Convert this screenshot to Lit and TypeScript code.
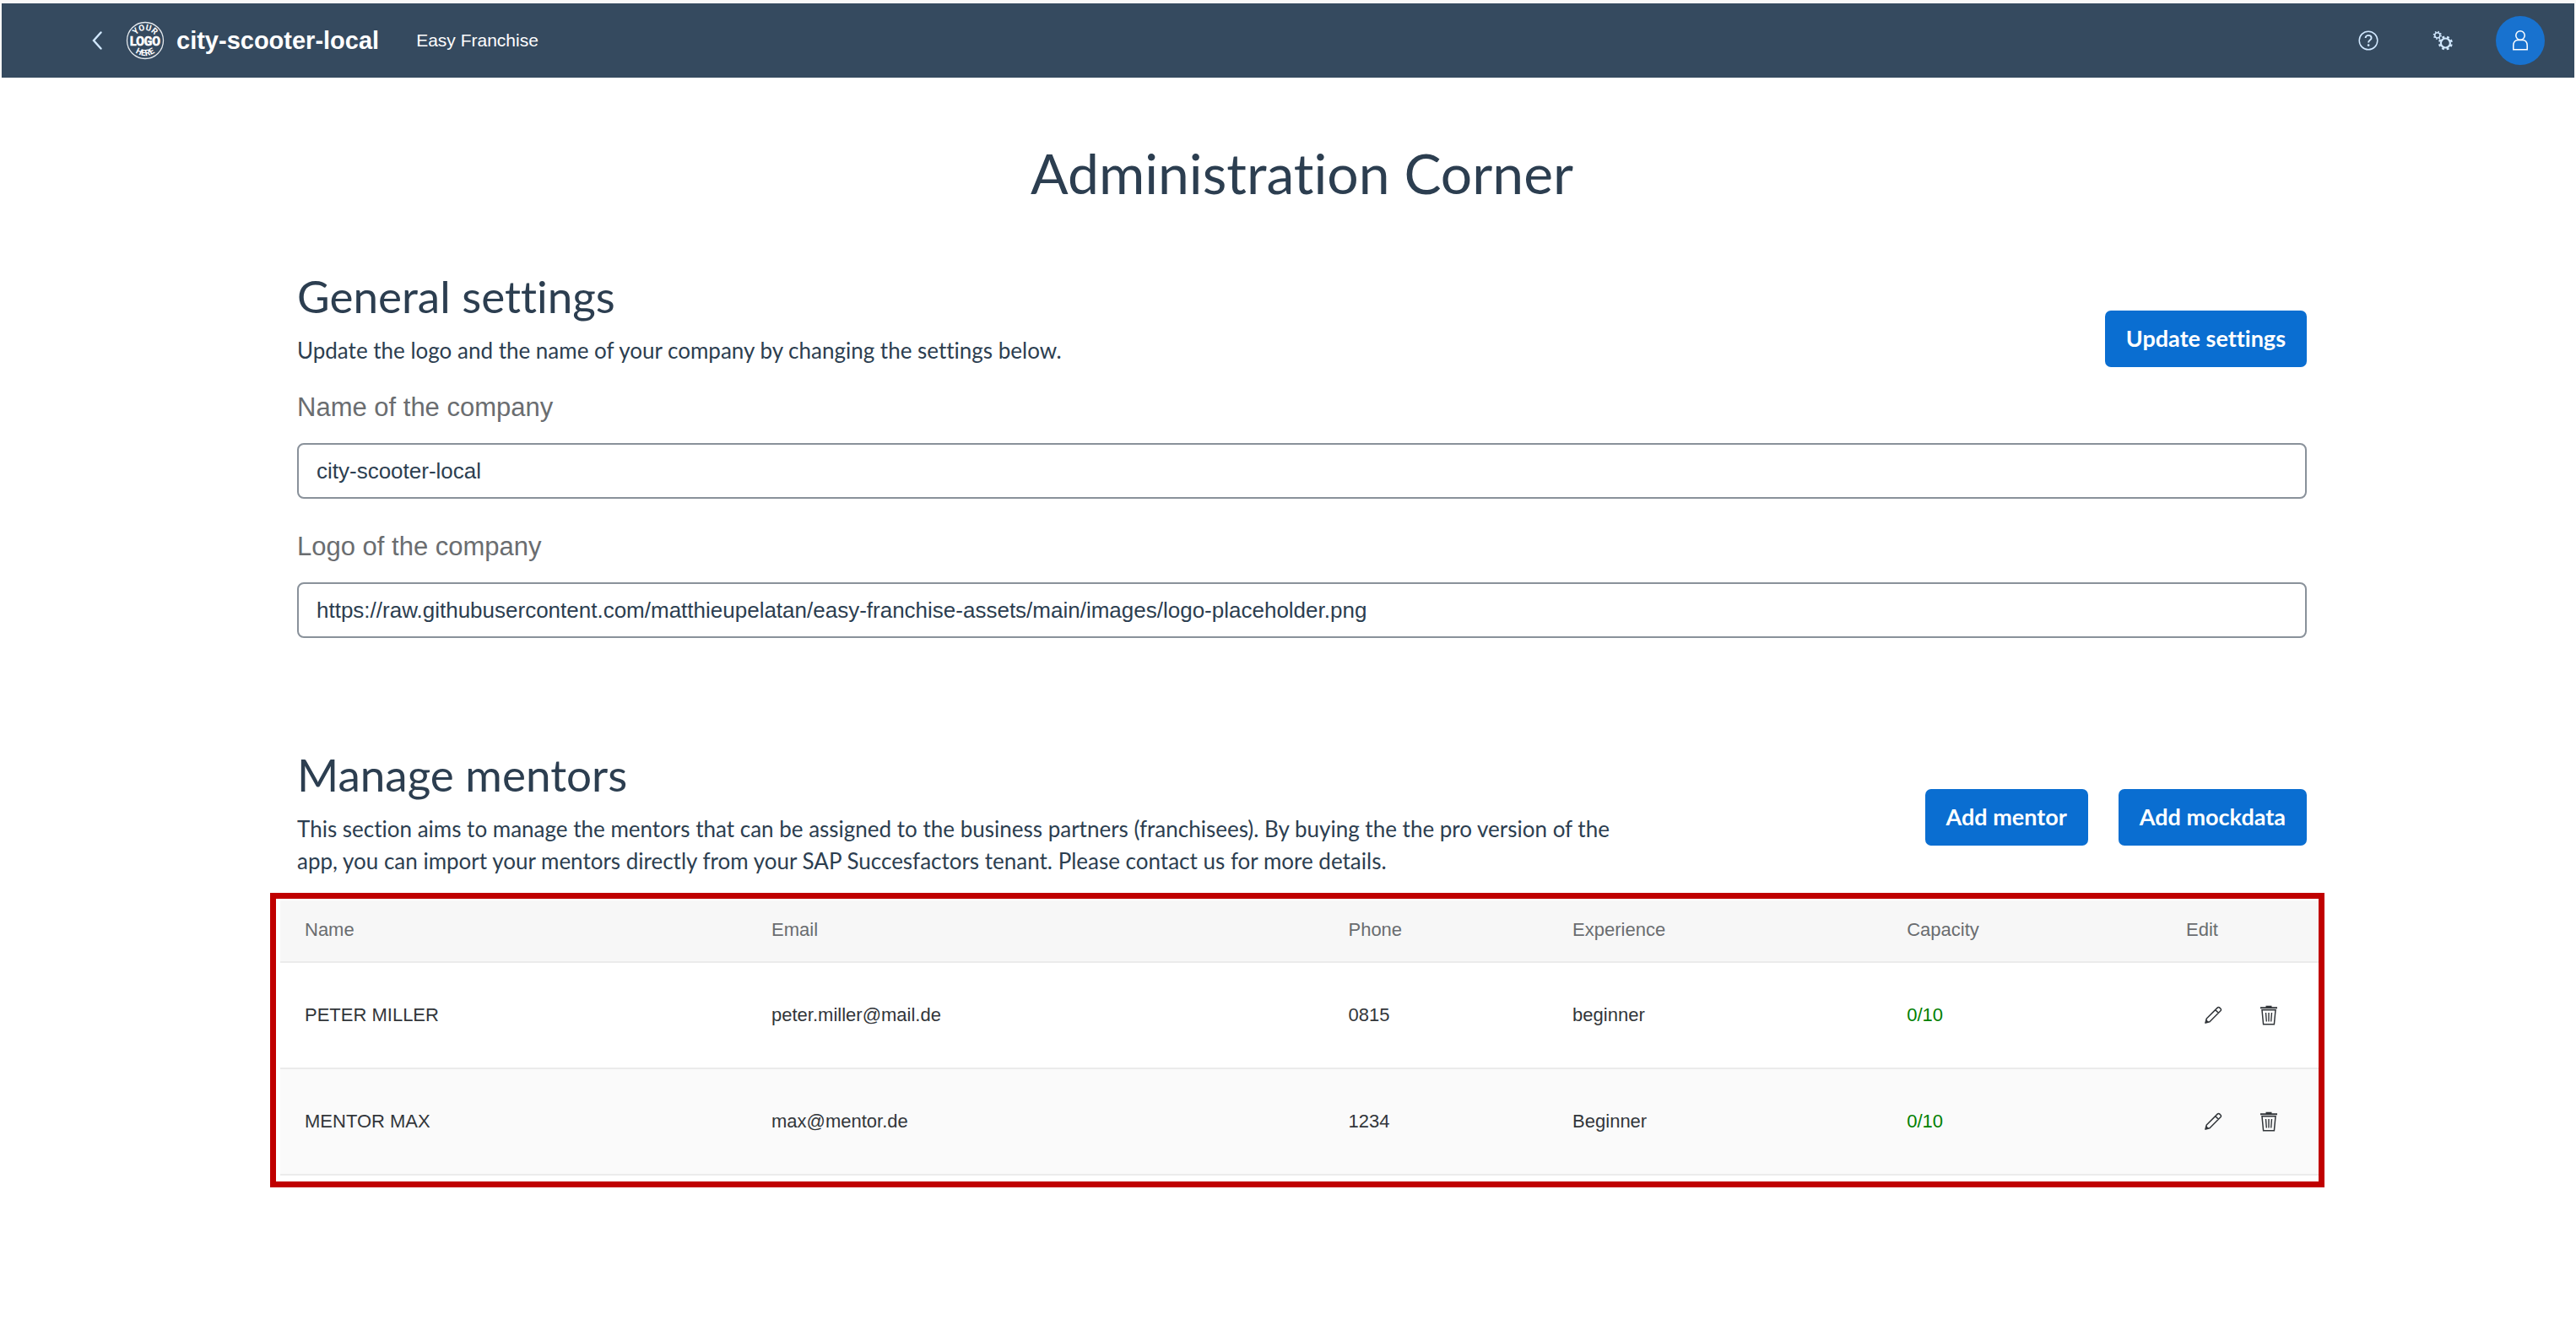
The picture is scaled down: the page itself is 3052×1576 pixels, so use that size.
import { LitElement, html, css, svg } from "lit";
import { customElement, property, state } from "lit/decorators.js";

interface Mentor {
  name: string;
  email: string;
  phone: string;
  experience: string;
  capacity: string;
}

const backIcon = svg`<svg width="12" height="22" viewBox="0 0 12 22" aria-hidden="true">
  <path d="M10.500 1.500 L2 11 L10.500 20.500" fill="none" stroke="#d1e8ff" stroke-width="2.400" stroke-linecap="round"/>
</svg>`;

const logo = svg`<svg class="logo" width="46" height="46" viewBox="0 0 46 46" role="img" aria-label="Company logo">
  <defs>
    <path id="upper" d="M9.500 24.500 A13.500 13.500 0 0 1 36.500 24.500"/>
    <path id="lower" d="M3.500 21.500 A19.500 19.500 0 0 0 42.500 21.500"/>
  </defs>
  <circle cx="23" cy="23" r="21.500" fill="none" stroke="#e4e9ee" stroke-width="1.300"/>
  <g fill="#ffffff" font-family="Roboto, Liberation Sans, sans-serif" font-weight="700" text-anchor="middle">
    <text font-size="10"><textPath href="#upper" startOffset="50%">YOUR</textPath></text>
    <text x="23" y="28.500" font-size="14" stroke="#ffffff" stroke-width="0.700">LOGO</text>
    <text font-size="10"><textPath href="#lower" startOffset="50%">HERE</textPath></text>
  </g>
</svg>`;

const helpIcon = svg`<svg width="24" height="24" viewBox="0 0 24 24" aria-hidden="true" fill="none" stroke="#d1e8ff" stroke-width="1.500">
  <circle cx="12" cy="12" r="10.800"/>
  <path d="M8.600 9 C8.600 4.800 15.600 4.800 15.600 9 C15.600 11.600 12.100 11.400 12.100 14.400" stroke-width="1.900"/>
  <circle cx="12.100" cy="17.600" r="1.300" fill="#d1e8ff" stroke="none"/>
</svg>`;

const gearsIcon = svg`<svg width="24" height="24" viewBox="0 0 24 24" aria-hidden="true" fill="none" stroke="#d1e8ff">
  <circle cx="5.800" cy="5.800" r="3.100" stroke-width="1.500"/>
  <circle cx="5.800" cy="5.800" r="4.300" stroke-width="1.600" stroke-dasharray="1.500 1.877"/>
  <circle cx="15.400" cy="15" r="5.500" stroke-width="2.200"/>
  <circle cx="15.400" cy="15" r="7.300" stroke-width="2.400" stroke-dasharray="2.800 2.933" stroke-dashoffset="-1.500"/>
</svg>`;

const userIcon = svg`<svg width="20" height="26" viewBox="0 0 20 26" aria-hidden="true" fill="none" stroke="#ffffff" stroke-width="1.500">
  <circle cx="10" cy="7" r="5.200"/>
  <path d="M1.800 23.700 V18.700 C1.800 14.700 4.400 12.400 7 12.400 H13 C15.600 12.400 18.200 14.700 18.200 18.700 V23.700 Z"/>
</svg>`;

const editIcon = svg`<svg width="22" height="22" viewBox="0 0 22 22" aria-hidden="true" fill="none" stroke="#32363a" stroke-width="1.500" stroke-linejoin="round">
  <path d="M2 20 L3.300 15 L16.200 2.100 C17 1.300 18 1.300 18.800 2.100 L19.900 3.200 C20.700 4 20.700 5 19.900 5.800 L7 18.700 Z M13.700 4.600 L17.400 8.300"/>
  <path d="M1.600 20.400 L2.900 16 L6 19.100 Z" fill="#32363a" stroke="none"/>
</svg>`;

const deleteIcon = svg`<svg width="20" height="24" viewBox="0 0 20 24" aria-hidden="true" fill="none" stroke="#32363a" stroke-width="1.500">
  <path d="M6.500 1.700 H13.500 M0 3.200 H20" stroke-width="1.900"/>
  <path d="M2 5.800 L3.600 22.700 H16.400 L18 5.800 Z"/>
  <path d="M6.500 9 L7.300 19.500 M10 9 V19.500 M13.500 9 L12.700 19.500" stroke-width="1.400"/>
</svg>`;

@customElement("shell-bar")
export class ShellBar extends LitElement {
  @property() company = "";

  static styles = css`
    :host {
      display: block;
      padding: 4px 2px 0;
      background: #f8f8f8;
    }
    .bar {
      display: flex;
      align-items: center;
      height: 88px;
      padding: 0 35px 0 97px;
      background: #354a5f;
      color: #ffffff;
      font-family: "Liberation Sans", sans-serif;
    }
    button {
      display: flex;
      align-items: center;
      justify-content: center;
      border: 0;
      padding: 0;
      background: none;
      cursor: pointer;
    }
    .back {
      width: 32px;
      height: 44px;
    }
    .logo {
      margin: 0 14px 0 18px;
    }
    .company {
      font-size: 29px;
      font-weight: 700;
      line-height: 36px;
    }
    .product {
      margin-left: 44px;
      font-size: 21px;
      line-height: 28px;
    }
    .actions {
      display: flex;
      align-items: center;
      gap: 30px;
      margin-left: auto;
    }
    .tool {
      width: 58px;
      height: 58px;
      border-radius: 50%;
    }
    .user {
      margin-left: 4px;
      background: #1872cf;
    }
  `;

  render() {
    return html`
      <header class="bar">
        <button class="back" aria-label="Back">${backIcon}</button>
        ${logo}
        <span class="company">${this.company}</span>
        <span class="product">Easy Franchise</span>
        <div class="actions">
          <button class="tool" aria-label="Help">${helpIcon}</button>
          <button class="tool" aria-label="Settings">${gearsIcon}</button>
          <button class="tool user" aria-label="Profile">${userIcon}</button>
        </div>
      </header>
    `;
  }
}

@customElement("mentor-table")
export class MentorTable extends LitElement {
  @property({ attribute: false }) mentors: Mentor[] = [];

  static styles = css`
    :host {
      display: block;
      border: 7px solid #c00000;
      padding: 2px 0 7px 5px;
    }
    table {
      width: 100%;
      table-layout: fixed;
      border-collapse: separate;
      border-spacing: 0;
      font-family: "Liberation Sans", sans-serif;
      font-size: 22px;
      line-height: 28px;
      color: #32363a;
    }
    .c-name { width: 22.9%; }
    .c-email { width: 28.3%; }
    .c-phone { width: 11%; }
    .c-experience { width: 16.4%; }
    .c-capacity { width: 13.7%; }
    th,
    td {
      padding: 0 0 0 29px;
      border-bottom: 2px solid #ebebeb;
      text-align: left;
      font-weight: 400;
    }
    th {
      height: 70px;
      padding-bottom: 2px;
      background: #f7f7f7;
      color: #6a6d70;
    }
    td {
      height: 124px;
    }
    tbody tr:nth-child(even) {
      background: #fafafa;
    }
    .capacity {
      color: #008000;
    }
    .tools {
      display: flex;
      gap: 22px;
      padding-left: 10px;
    }
    button {
      display: flex;
      align-items: center;
      justify-content: center;
      width: 44px;
      height: 44px;
      padding: 0;
      border: 0;
      background: none;
      cursor: pointer;
    }
  `;

  render() {
    return html`
      <table>
        <colgroup>
          <col class="c-name" /><col class="c-email" /><col class="c-phone" />
          <col class="c-experience" /><col class="c-capacity" /><col />
        </colgroup>
        <thead>
          <tr>
            <th scope="col">Name</th>
            <th scope="col">Email</th>
            <th scope="col">Phone</th>
            <th scope="col">Experience</th>
            <th scope="col">Capacity</th>
            <th scope="col">Edit</th>
          </tr>
        </thead>
        <tbody>
          ${this.mentors.map(
            (m) => html`
              <tr>
                <td>${m.name}</td>
                <td>${m.email}</td>
                <td>${m.phone}</td>
                <td>${m.experience}</td>
                <td class="capacity">${m.capacity}</td>
                <td>
                  <div class="tools">
                    <button aria-label="Edit ${m.name}">${editIcon}</button>
                    <button aria-label="Delete ${m.name}">${deleteIcon}</button>
                  </div>
                </td>
              </tr>
            `
          )}
        </tbody>
      </table>
    `;
  }
}

@customElement("app-root")
export class AppRoot extends LitElement {
  @state() private company = "city-scooter-local";
  @state() private logoUrl =
    "https://raw.githubusercontent.com/matthieupelatan/easy-franchise-assets/main/images/logo-placeholder.png";
  @state() private mentors: Mentor[] = [
    { name: "PETER MILLER", email: "peter.miller@mail.de", phone: "0815", experience: "beginner", capacity: "0/10" },
    { name: "MENTOR MAX", email: "max@mentor.de", phone: "1234", experience: "Beginner", capacity: "0/10" },
  ];

  static styles = css`
    :host {
      display: block;
      min-height: 100vh;
      background: #ffffff;
      color: #2c3e50;
      font-family: Lato, sans-serif;
      font-variant-ligatures: none;
    }
    main {
      padding: 73px 319px 60px 352px;
    }
    h1,
    h2,
    p {
      margin: 0;
      font-weight: 400;
    }
    h1 {
      font-size: 66px;
      line-height: 80px;
      text-align: center;
    }
    h2 {
      font-size: 53px;
      line-height: 64px;
    }
    .general {
      margin-top: 74px;
    }
    .mentors {
      margin-top: 130px;
    }
    .head {
      display: flex;
      align-items: flex-start;
      justify-content: space-between;
    }
    .intro p {
      max-width: 1590px;
      margin-top: 13px;
      font-size: 26px;
      line-height: 38px;
    }
    .buttons {
      display: flex;
      gap: 36px;
      margin-top: 49px;
    }
    .buttons button {
      height: 67px;
      padding: 0 25px 2px;
      border: 0;
      border-radius: 7px;
      background: #0a6ed1;
      color: #ffffff;
      font-family: Lato, sans-serif;
      font-size: 27px;
      font-weight: 700;
      font-variant-ligatures: none;
      white-space: nowrap;
      cursor: pointer;
    }
    .field {
      display: flex;
      flex-direction: column;
      gap: 24px;
      margin-top: 30px;
    }
    .field + .field {
      margin-top: 39px;
    }
    .field label {
      font-family: "Liberation Sans", sans-serif;
      font-size: 31px;
      line-height: 36px;
      color: #6a6d70;
    }
    .field input {
      box-sizing: border-box;
      width: 100%;
      height: 66px;
      padding: 0 21px;
      border: 2px solid #89919a;
      border-radius: 8px;
      background: #ffffff;
      color: #2c3e50;
      font-family: "Liberation Sans", sans-serif;
      font-size: 26px;
    }
    .table {
      margin: 19px -21px 0 -32px;
    }
  `;

  render() {
    return html`
      <shell-bar .company=${this.company}></shell-bar>
      <main>
        <h1>Administration Corner</h1>
        <section class="general">
          <div class="head">
            <div class="intro">
              <h2>General settings</h2>
              <p>Update the logo and the name of your company by changing the settings below.</p>
            </div>
            <div class="buttons"><button>Update settings</button></div>
          </div>
          <div class="field">
            <label for="company">Name of the company</label>
            <input id="company" type="text" .value=${this.company} />
          </div>
          <div class="field">
            <label for="logo">Logo of the company</label>
            <input id="logo" type="text" .value=${this.logoUrl} />
          </div>
        </section>
        <section class="mentors">
          <div class="head">
            <div class="intro">
              <h2>Manage mentors</h2>
              <p>
                This section aims to manage the mentors that can be assigned to the business partners (franchisees). By
                buying the the pro version of the app, you can import your mentors directly from your SAP Succesfactors
                tenant. Please contact us for more details.
              </p>
            </div>
            <div class="buttons">
              <button>Add mentor</button>
              <button>Add mockdata</button>
            </div>
          </div>
          <mentor-table class="table" .mentors=${this.mentors}></mentor-table>
        </section>
      </main>
    `;
  }
}
